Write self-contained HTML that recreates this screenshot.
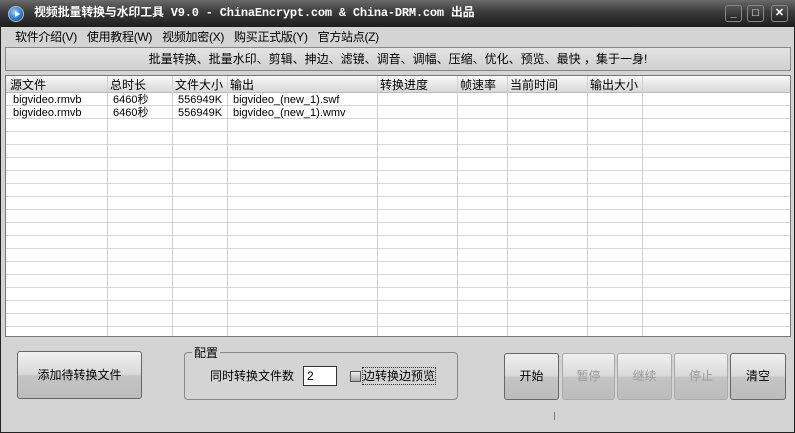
<!DOCTYPE html><html><head><meta charset="utf-8"><style>
*{margin:0;padding:0;box-sizing:border-box}
body{width:795px;height:433px;overflow:hidden;background:#d4d4d4;font-family:"Liberation Sans","Noto Sans CJK SC",sans-serif;font-size:12px;color:#000;position:relative}
.win{position:absolute;left:0;top:0;width:795px;height:433px;border:1px solid #222;border-top:none}
.title{position:absolute;left:0;top:0;width:795px;height:27px;background:linear-gradient(#6a6a6a,#3a3a3a 45%,#1e1e1e);color:#fff;font-weight:bold;font-size:12px;line-height:27px}
.title .t{position:absolute;left:34px;top:0;font-family:"Liberation Mono","Noto Sans CJK SC",monospace;white-space:nowrap;letter-spacing:-0.2px}
.logo{position:absolute;left:8px;top:6px;width:16px;height:16px;border-radius:50%;background:radial-gradient(circle at 40% 35%,#9cf,#27c 60%,#038);border:1px solid #bbb}
.logo:after{content:"";position:absolute;left:6px;top:4px;border-left:5px solid #fff;border-top:3.5px solid transparent;border-bottom:3.5px solid transparent}
.wb{position:absolute;top:5px;width:17px;height:17px;border:1px solid #888;border-radius:3px;background:linear-gradient(#555,#222);color:#fff;font-size:11px;line-height:15px;text-align:center}
.menu{position:absolute;top:28px;left:15px;line-height:18px;font-size:12px;white-space:nowrap}
.menu span{margin-right:10px;letter-spacing:-0.3px}
.banner{position:absolute;left:5px;top:47px;width:786px;height:24px;border:1px solid #888;background:linear-gradient(#e4e4e4,#cfcfcf);text-align:center;line-height:22px;font-size:12px}
.list{position:absolute;left:5px;top:75px;width:786px;height:262px;border:1px solid #777;background:#fff;overflow:hidden}
.hdr{position:absolute;left:0;top:0;width:100%;height:17px;background:linear-gradient(#fafafa,#e8e8e8 50%,#d8d8d8);border-bottom:1px solid #bbb}
.rows{position:absolute;left:0;top:17px;width:100%;height:245px;background:repeating-linear-gradient(#fff 0,#fff 12px,#d8d8d8 12px,#d8d8d8 13px)}
.vl{position:absolute;top:0;width:1px;height:100%;background:#d0d0d0}
.c{position:absolute;white-space:nowrap;font-size:11px;line-height:13px;height:13px}
.h{top:1px;font-size:12px;line-height:16px;height:16px}
.btn{position:absolute;border:1px solid #666;border-radius:3px;background:linear-gradient(#f0f0f0,#dadada 48%,#c4c4c4 52%,#bcbcbc);text-align:center;font-size:12px}
.dis{color:#999;border-color:#aaa}
.grp{position:absolute;left:184px;top:352px;width:274px;height:48px;border:1px solid #888;border-radius:4px}
</style></head><body>
<div class="win"></div>
<div class="title"><div class="logo"></div><div class="t">视频批量转换与水印工具 V9.0 - ChinaEncrypt.com &amp; China-DRM.com 出品</div>
<div class="wb" style="left:725px">_</div><div class="wb" style="left:747px">□</div><div class="wb" style="left:771px">✕</div></div>
<div class="menu"><span>软件介绍(V)</span><span>使用教程(W)</span><span>视频加密(X)</span><span>购买正式版(Y)</span><span>官方站点(Z)</span></div>
<div class="banner">批量转换、批量水印、剪辑、抻边、滤镜、调音、调幅、压缩、优化、预览、最快 ，集于一身!</div>
<div class="list">
<div class="hdr"></div><div class="rows"></div>
<div class="vl" style="left:101px"></div><div class="vl" style="left:166px"></div><div class="vl" style="left:221px"></div><div class="vl" style="left:371px"></div><div class="vl" style="left:451px"></div><div class="vl" style="left:501px"></div><div class="vl" style="left:581px"></div><div class="vl" style="left:636px"></div>
<div class="c h" style="left:4px">源文件</div><div class="c h" style="left:104px">总时长</div><div class="c h" style="left:169px">文件大小</div><div class="c h" style="left:224px">输出</div><div class="c h" style="left:374px">转换进度</div><div class="c h" style="left:454px">帧速率</div><div class="c h" style="left:504px">当前时间</div><div class="c h" style="left:584px">输出大小</div>
<div class="c" style="left:7px;top:18px">bigvideo.rmvb</div><div class="c" style="left:107px;top:18px">6460秒</div><div class="c" style="left:172px;top:18px">556949K</div><div class="c" style="left:227px;top:18px">bigvideo_(new_1).swf</div>
<div class="c" style="left:7px;top:31px">bigvideo.rmvb</div><div class="c" style="left:107px;top:31px">6460秒</div><div class="c" style="left:172px;top:31px">556949K</div><div class="c" style="left:227px;top:31px">bigvideo_(new_1).wmv</div>
</div>
<div class="btn" style="left:17px;top:351px;width:125px;height:48px;line-height:46px">添加待转换文件</div>
<div class="grp"></div>
<div style="position:absolute;left:192px;top:345px;background:#d4d4d4;padding:0 2px;line-height:16px">配置</div>
<div style="position:absolute;left:210px;top:368px;line-height:16px">同时转换文件数</div>
<div style="position:absolute;left:303px;top:366px;width:34px;height:20px;border:1px solid #333;background:#fff;line-height:18px;padding-left:3px">2</div>
<div style="position:absolute;left:350px;top:371px;width:11px;height:11px;border:1px solid #555;background:linear-gradient(#eee,#aaa)"></div>
<div style="position:absolute;left:363px;top:368px;line-height:16px;outline:1px dotted #333">边转换边预览</div>
<div class="btn" style="left:504px;top:353px;width:55px;height:47px;line-height:45px">开始</div>
<div class="btn dis" style="left:562px;top:353px;width:53px;height:47px;line-height:45px">暂停</div>
<div class="btn dis" style="left:617px;top:353px;width:55px;height:47px;line-height:45px">继续</div>
<div class="btn dis" style="left:674px;top:353px;width:54px;height:47px;line-height:45px">停止</div>
<div class="btn" style="left:730px;top:353px;width:56px;height:47px;line-height:45px">清空</div>
<div style="position:absolute;left:554px;top:412px;width:1px;height:8px;background:#777"></div>
</body></html>
